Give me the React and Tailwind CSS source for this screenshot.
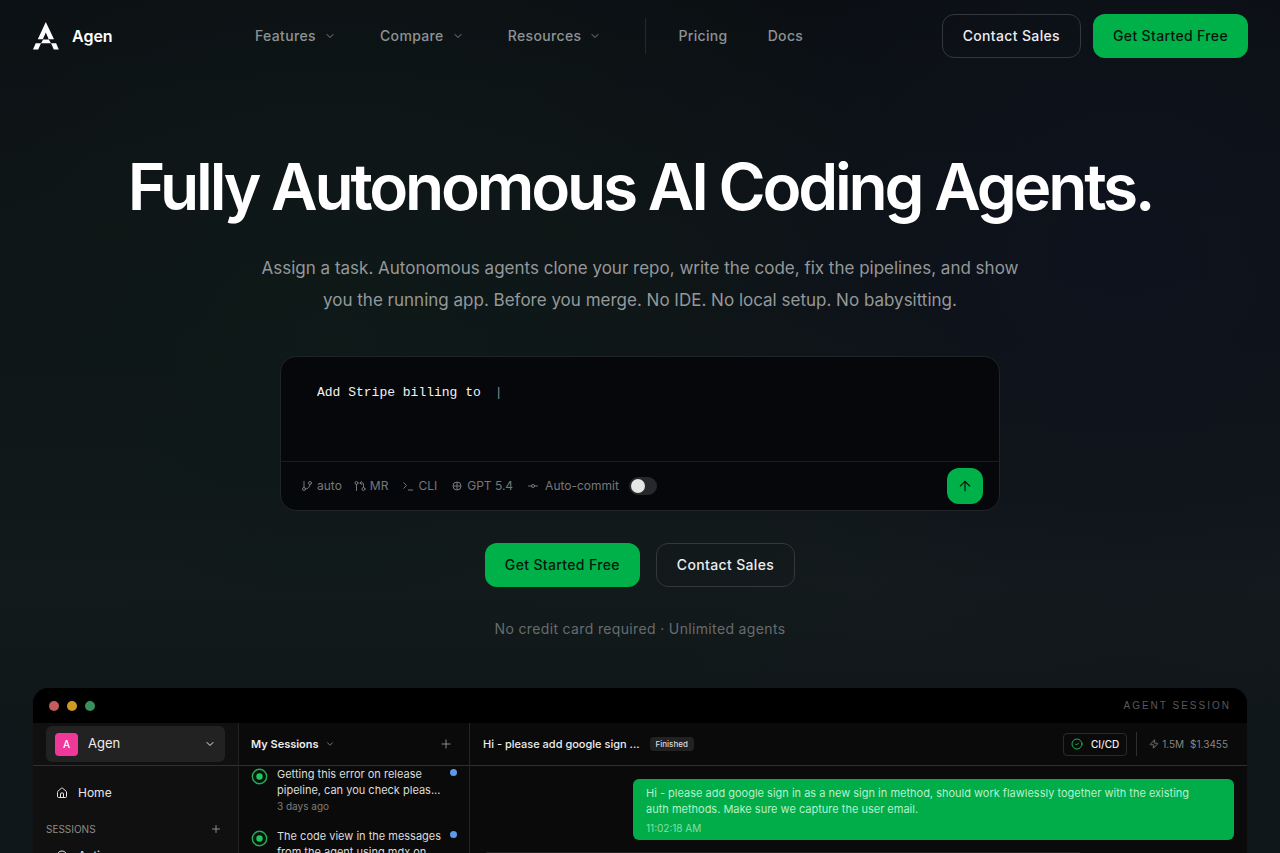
import React from "react";
import {
  ArrowUp,
  ChevronDown,
  CircleCheck,
  GitBranch,
  GitCommitHorizontal,
  GitPullRequestArrow,
  House,
  Plus,
  Zap,
} from "lucide-react";

function Logo() {
  return (
    <svg viewBox="0 0 26 28" className="h-7 w-[26px]" fill="#fff" aria-hidden="true">
      <path d="M12.8 0 L21 17.2 H15.7 L12.8 10.6 L9.9 17.2 H4.8 Z" />
      <path d="M10.2 17.6 H15.8 L18 21.2 H8 Z" />
      <path d="M2.7 21.2 H8 L5.2 27.6 H0 Z" />
      <path d="M18 21.2 H23.1 L25.8 27.6 H20.8 Z" />
    </svg>
  );
}

function PrimaryLink() {
  return (
    <a
      href="#start"
      className="flex h-11 items-center whitespace-nowrap rounded-xl bg-[#00b14a] px-5 text-sm font-medium tracking-wide text-[#06170c]"
    >
      Get Started Free
    </a>
  );
}

function SecondaryLink() {
  return (
    <a
      href="#sales"
      className="flex h-11 items-center whitespace-nowrap rounded-xl border border-[#34383b] px-5 text-sm font-medium tracking-wide text-[#ececee]"
    >
      Contact Sales
    </a>
  );
}

function NavMenu({ label }) {
  return (
    <button type="button" className="flex items-center gap-2 tracking-wide">
      {label}
      <ChevronDown className="size-3 text-[#7d8284]" strokeWidth={2} />
    </button>
  );
}

function Header() {
  return (
    <header className="flex h-18 items-center justify-between pl-[33px] pr-8">
      <a href="#home" className="flex w-[222px] items-center gap-[13px] text-base font-semibold text-white">
        <Logo />
        Agen
      </a>
      <nav className="flex flex-1 items-center text-sm font-medium tracking-wide text-[#8e9294]">
        <div className="flex items-center gap-11">
          <NavMenu label="Features" />
          <NavMenu label="Compare" />
          <NavMenu label="Resources" />
        </div>
        <div className="ml-11 flex h-9 items-center gap-10 border-l border-[#24292b] pl-8">
          <a href="#pricing">Pricing</a>
          <a href="#docs">Docs</a>
        </div>
      </nav>
      <div className="flex gap-3">
        <SecondaryLink />
        <PrimaryLink />
      </div>
    </header>
  );
}

function TargetIcon() {
  return (
    <svg viewBox="0 0 12 12" className="size-3" fill="none" stroke="currentColor" strokeWidth="1" aria-hidden="true">
      <circle cx="6" cy="6" r="4" />
      <path d="M6 2v8M2 6h8" />
    </svg>
  );
}

function PromptIcon() {
  return (
    <svg viewBox="0 0 12 12" className="size-3" fill="none" stroke="currentColor" strokeWidth="1" aria-hidden="true">
      <path d="M1.5 2.5 L4.5 5.5 L1.5 8.5 M6 10 H11" />
    </svg>
  );
}

function Composer() {
  return (
    <form
      className="mt-10 w-full max-w-[720px] rounded-2xl border border-[#1f2427] bg-[#06070b]"
      onSubmit={(e) => e.preventDefault()}
    >
      <div className="flex h-26 items-start px-9 pt-[26px] font-['Liberation_Mono',monospace] text-[13px] leading-5">
        <input
          aria-label="Task"
          defaultValue="Add Stripe billing to "
          className="min-w-0 bg-transparent text-[#f1f1f2] outline-none [field-sizing:content]"
        />
        <span className="ml-[6px] text-[#85888b]">|</span>
      </div>
      <div className="flex h-[49px] items-center border-t border-[#1a1c20] pl-5 pr-4 text-xs text-[#75787b]">
        <div className="flex items-center gap-3">
          <button type="button" className="flex items-center gap-1">
            <GitBranch className="size-3" />
            auto
          </button>
          <button type="button" className="flex items-center gap-1">
            <GitPullRequestArrow className="size-3" />
            MR
          </button>
        </div>
        <div className="ml-[14px] flex items-center gap-[14px]">
          <button type="button" className="flex items-center gap-1">
            <PromptIcon />
            CLI
          </button>
          <button type="button" className="flex items-center gap-1">
            <TargetIcon />
            GPT 5.4
          </button>
          <label className="flex items-center gap-[6px]">
            <GitCommitHorizontal className="size-3" />
            Auto-commit
            <input
              type="checkbox"
              role="switch"
              className="ml-1 h-[18px] w-7 appearance-none rounded-full bg-[#27282b] p-[2px] before:block before:size-[14px] before:rounded-full before:bg-[#e6e6e6] checked:before:ml-auto"
            />
          </label>
        </div>
        <button
          type="submit"
          aria-label="Send task"
          className="ml-auto flex size-9 items-center justify-center rounded-xl bg-[#00b14a] text-[#06170c]"
        >
          <ArrowUp className="size-4" strokeWidth={1.75} />
        </button>
      </div>
    </form>
  );
}

function SessionRow({ lines, age }) {
  return (
    <a href="#session" className="flex items-start pl-3 pr-3">
      <svg viewBox="0 0 18 18" className="mt-[2px] size-[17px] shrink-0" aria-hidden="true">
        <circle cx="9" cy="9" r="7.6" fill="#04150b" stroke="#28a957" strokeWidth="1.5" />
        <circle cx="9" cy="9" r="3.4" fill="#22c55e" />
      </svg>
      <span className="ml-[9px] flex-1 whitespace-nowrap text-[11px] leading-4 text-[#dcdcdc]">
        {lines.map((line) => (
          <span key={line} className="block">
            {line}
          </span>
        ))}
        <span className="block text-[10px] text-[#7d7d7d]">{age}</span>
      </span>
      <span className="mt-[3px] size-[7px] shrink-0 rounded-full bg-[#5b9bea]" />
    </a>
  );
}

function Sidebar() {
  return (
    <aside className="w-[206px] shrink-0 border-r border-[#222] bg-[#101010]">
      <div className="flex h-[43px] items-center border-b border-[#303030] px-[13px]">
        <button
          type="button"
          className="flex h-9 w-full items-center gap-[10px] rounded-md bg-[#222] px-[9px] text-[13px] text-[#ededed]"
        >
          <span className="flex size-[23px] items-center justify-center rounded bg-[#f0379a] text-[10px] font-medium text-white">
            A
          </span>
          Agen
          <ChevronDown className="ml-auto size-3" />
        </button>
      </div>
      <a href="#home" className="mt-[19px] flex h-4 items-center gap-[10px] pl-[23px] text-xs text-[#e6e6e6]">
        <House className="size-3" />
        Home
      </a>
      <div className="mt-5 flex h-4 items-center justify-between pl-[13px] pr-4 text-[10px] text-[#8c8c8c]">
        SESSIONS
        <Plus className="size-3" />
      </div>
      <a href="#active" className="mt-[11px] flex h-4 items-center gap-[10px] pl-[23px] text-xs text-[#e6e6e6]">
        <CircleCheck className="size-3" />
        Active
      </a>
    </aside>
  );
}

function Sessions() {
  return (
    <section className="w-[231px] shrink-0 border-r border-[#252525] bg-[#0a0a0a]">
      <div className="flex h-[43px] items-center border-b border-[#303030] pl-3 pr-4">
        <button type="button" className="flex items-center gap-[6px] text-[11px] font-semibold text-[#ececec]">
          My Sessions
          <ChevronDown className="size-[10px] text-[#8a8a8a]" />
        </button>
        <button type="button" aria-label="New session" className="ml-auto text-[#9a9a9a]">
          <Plus className="size-[14px]" strokeWidth={1.5} />
        </button>
      </div>
      <div className="flex flex-col gap-[14px]">
        <SessionRow lines={["Getting this error on release", "pipeline, can you check pleas..."]} age="3 days ago" />
        <SessionRow lines={["The code view in the messages", "from the agent using mdx on..."]} age="3 days ago" />
      </div>
    </section>
  );
}

function Conversation() {
  return (
    <section className="min-w-0 flex-1 bg-[#0a0a0a]">
      <div className="flex h-[43px] items-center whitespace-nowrap border-b border-[#303030] pl-[13px] pr-[19px]">
        <h2 className="text-[11px] font-medium text-[#ececec]">Hi - please add google sign ...</h2>
        <span className="ml-[10px] flex h-[14px] items-center rounded bg-[#222] px-[6px] text-[8px] font-medium text-[#dadada]">
          Finished
        </span>
        <button
          type="button"
          className="ml-auto flex h-[23px] items-center gap-2 rounded border border-[#2a2a2a] px-[7px] text-[10px] font-medium text-[#f0f0f0]"
        >
          <CircleCheck className="size-3 text-[#22b05a]" />
          CI/CD
        </button>
        <div className="ml-[9px] flex h-6 items-center gap-[3px] border-l border-[#2e2e2e] pl-3 text-[10px] text-[#858585]">
          <Zap className="size-[10px]" />
          1.5M
          <span className="ml-[3px]">$1.3455</span>
        </div>
      </div>
      <div className="pl-[163px] pr-[13px] pt-[13px]">
        <div className="rounded-md bg-[#00ad48] pb-1 pl-[13px] pr-8 pt-[6px] text-[11px] leading-4 text-[#b9efcb]">
          <p>
            Hi - please add google sign in as a new sign in method, should work flawlessly together with the existing
            auth methods. Make sure we capture the user email.
          </p>
          <time className="mt-[3px] block text-[10px] text-[#8bdca8]">11:02:18 AM</time>
        </div>
      </div>
      <div className="ml-4 mr-[167px] mt-3 border-t border-[#222]" />
    </section>
  );
}

function Preview() {
  return (
    <div className="mx-8 mt-[49px] flex min-h-40 flex-1 basis-0 flex-col overflow-hidden rounded-t-2xl border-x border-[#121517] bg-[#0a0a0a]">
      <div className="flex h-[35px] shrink-0 items-center justify-between bg-black px-4">
        <div className="flex gap-2">
          <span className="size-[10px] rounded-full bg-[#c65b5b]" />
          <span className="size-[10px] rounded-full bg-[#cf9b24]" />
          <span className="size-[10px] rounded-full bg-[#37915f]" />
        </div>
        <span className="font-['Liberation_Sans',sans-serif] text-[10px] tracking-[2px] text-[#57595b]">
          AGENT SESSION
        </span>
      </div>
      <div className="flex h-0 flex-1">
        <Sidebar />
        <Sessions />
        <Conversation />
      </div>
    </div>
  );
}

export default function App() {
  return (
    <div className="flex min-h-screen flex-col bg-[#0e1316] bg-[radial-gradient(ellipse_36%_50%_at_88%_30%,#0e121d_0%,transparent_100%),radial-gradient(ellipse_50%_60%_at_26%_40%,#0f1918_0%,transparent_100%),linear-gradient(180deg,#0b0f13_0%,#0e1417_40%,#141a1d_68%,#10171a_85%)] font-[Inter,sans-serif]">
      <Header />
      <main className="flex flex-1 flex-col">
        <section className="flex flex-col items-center px-8 pt-20 text-center">
          <h1 className="text-[64px] font-semibold leading-[70px] tracking-tighter text-white">
            Fully Autonomous AI Coding Agents.
          </h1>
          <p className="mt-[30px] max-w-[780px] text-[17px] leading-8 text-[#94989a]">
            Assign a task. Autonomous agents clone your repo, write the code, fix the pipelines, and show you the
            running app. Before you merge. No IDE. No local setup. No babysitting.
          </p>
          <Composer />
          <div className="mt-8 flex gap-4">
            <PrimaryLink />
            <SecondaryLink />
          </div>
          <p className="mt-8 text-sm leading-5 tracking-wide text-[#676c6e]">
            No credit card required · Unlimited agents
          </p>
        </section>
        <Preview />
      </main>
    </div>
  );
}
